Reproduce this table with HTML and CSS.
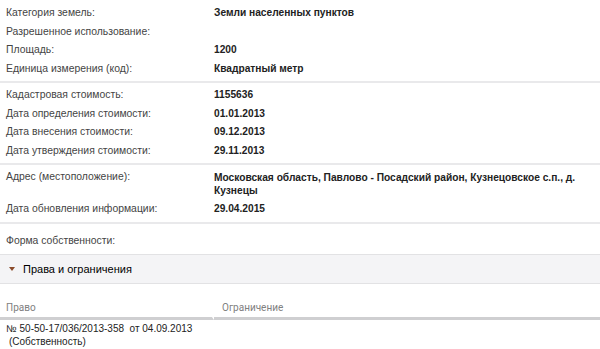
FILE: index.html
```html
<!DOCTYPE html>
<html lang="ru">

<head>
  <meta charset="UTF-8">
  <meta name="viewport" content="width=device-width, initial-scale=1.0">
  <title>Сведения об объекте</title>
  <link rel="stylesheet" href="styles.css">
</head>

<body>
  <div class="object-info">
    <div class="info-group">
      <div class="info-row"><span class="label">Категория земель:</span><span class="value">Земли населенных пунктов</span></div>
      <div class="info-row"><span class="label">Разрешенное использование:</span><span class="value"></span></div>
      <div class="info-row"><span class="label">Площадь:</span><span class="value">1200</span></div>
      <div class="info-row"><span class="label">Единица измерения (код):</span><span class="value">Квадратный метр</span></div>
    </div>

    <div class="info-group">
      <div class="info-row"><span class="label">Кадастровая стоимость:</span><span class="value">1155636</span></div>
      <div class="info-row"><span class="label">Дата определения стоимости:</span><span class="value">01.01.2013</span></div>
      <div class="info-row"><span class="label">Дата внесения стоимости:</span><span class="value">09.12.2013</span></div>
      <div class="info-row"><span class="label">Дата утверждения стоимости:</span><span class="value">29.11.2013</span></div>
    </div>

    <div class="info-group">
      <div class="info-row"><span class="label">Адрес (местоположение):</span><span class="value address">Московская область, Павлово - Посадский район, Кузнецовское с.п., д. Кузнецы</span></div>
      <div class="info-row"><span class="label">Дата обновления информации:</span><span class="value">29.04.2015</span></div>
    </div>

    <div class="info-group ownership">
      <div class="info-row"><span class="label">Форма собственности:</span><span class="value"></span></div>
    </div>

    <div class="section-head">
      <span class="arrow"></span>
      <span>Права и ограничения</span>
    </div>

    <table class="rights">
      <thead>
        <tr>
          <th class="col-right">Право</th>
          <th>Ограничение</th>
        </tr>
      </thead>
      <tbody>
        <tr>
          <td>№ 50-50-17/036/2013-358&nbsp; от 04.09.2013<br><span class="kind">(Собственность)</span></td>
          <td></td>
        </tr>
      </tbody>
    </table>
  </div>
</body>

</html>
```

FILE: styles.css
```css
body {
  margin: 0;
  font-family: "Liberation Sans", Arial, sans-serif;
  font-size: 10.4px;
  color: #333;
  background-color: #ffffff;
}

.object-info {
  width: 600px;
}

.info-group {
  padding: 3px 0;
  border-bottom: 2px solid #e9e9eb;
}

.info-group:first-child {
  padding-top: 4px;
}

.info-group.ownership {
  padding: 8px 0 4px;
  border-bottom: none;
}

.info-row {
  display: flex;
  padding: 3px 0;
  line-height: 12.5px;
}

.label {
  width: 208px;
  flex-shrink: 0;
  padding-left: 6px;
  color: #444;
}

.value {
  flex: 1;
  font-size: 10.2px;
  font-weight: bold;
  color: #222;
}

.value.address {
  line-height: 13px;
}

.section-head {
  display: flex;
  align-items: center;
  height: 28px;
  padding-left: 9px;
  gap: 8px;
  background-color: #f4f4f6;
  border-top: 1px solid #e2e2e4;
  border-bottom: 1px solid #e2e2e4;
  font-size: 11px;
  color: #000;
}

.arrow {
  width: 0;
  height: 0;
  border-left: 3.5px solid transparent;
  border-right: 3.5px solid transparent;
  border-top: 4px solid #8a4a2a;
}

.rights {
  width: 100%;
  margin-top: 7px;
  border-collapse: separate;
  border-spacing: 0;
}

.rights th {
  padding: 10px 0 3px 8px;
  line-height: 13px;
  text-align: left;
  font-family: Roboto, "Liberation Sans", sans-serif;
  font-size: 10px;
  font-weight: normal;
  color: #808080;
  border-bottom: 3px solid #cfcfd1;
}

.rights th.col-right {
  width: 206px;
  padding-left: 6px;
  border-right: 2px solid #fff;
}

.rights td {
  padding: 2px 0 1px 6px;
  font-size: 10px;
  line-height: 13px;
  vertical-align: top;
  color: #222;
  border-bottom: 1px solid #e2e2e4;
}

.kind {
  padding-left: 3px;
}
```
